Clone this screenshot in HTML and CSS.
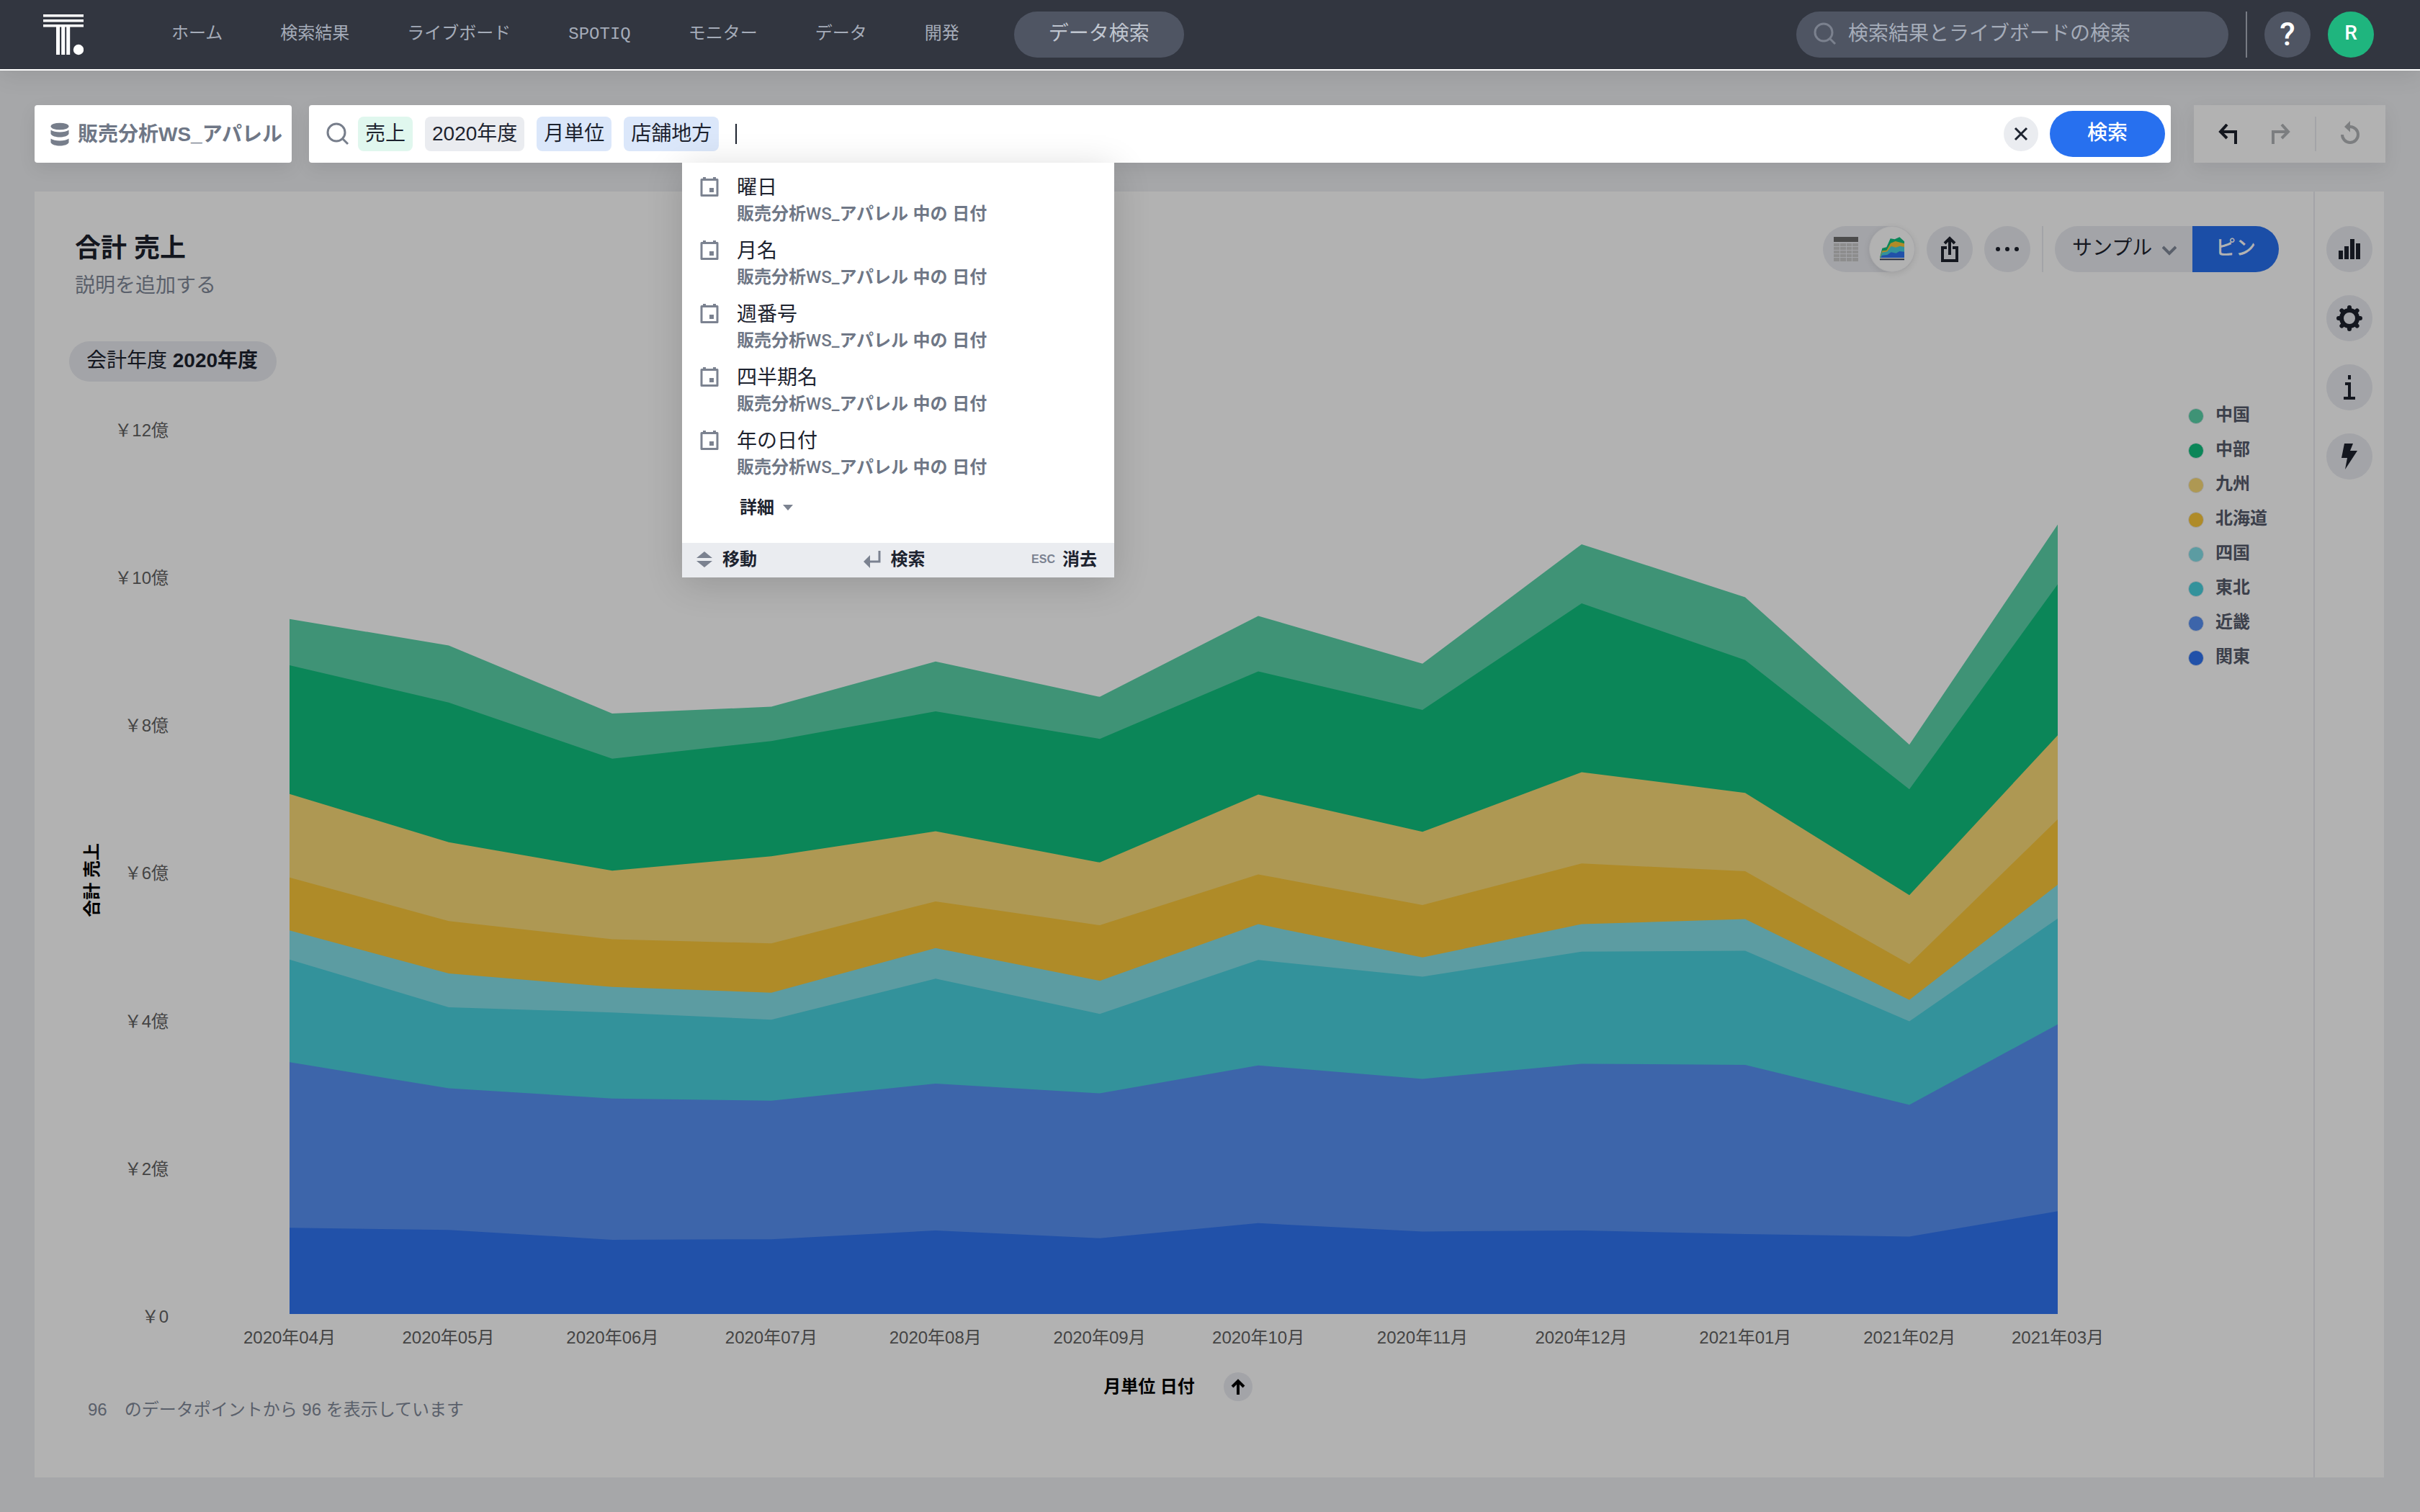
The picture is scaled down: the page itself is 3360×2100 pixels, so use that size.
FILE: index.html
```html
<!DOCTYPE html>
<html lang="ja">
<head>
<meta charset="utf-8">
<title>合計 売上</title>
<link rel="stylesheet" href="styles.css">
</head>
<body>
<header class="topbar">
  <a class="logo" href="#" aria-label="ホーム">
    <svg width="56" height="58" viewBox="0 0 56 58" fill="#fff">
      <path d="M0 1h56v3.500H0zM0 8h56v3.500H0zM0 15h56v3.500H0zM18 17h5v40h-5zM25.200 17h5v40h-5zM32.200 17h5v40h-5z"/>
      <circle cx="49" cy="50" r="7.200"/>
    </svg>
  </a>
  <nav class="nav">
    <a href="#">ホーム</a>
    <a href="#">検索結果</a>
    <a href="#">ライブボード</a>
    <a href="#">SPOTIQ</a>
    <a href="#">モニター</a>
    <a href="#">データ</a>
    <a href="#">開発</a>
  </nav>
  <button class="data-search">データ検索</button>
  <label class="global-search">
    <svg width="32" height="32" viewBox="0 0 32 32" fill="none" stroke="#7b818e" stroke-width="3"><circle cx="14" cy="14" r="12"/><path d="M22 22l8 8"/></svg>
    <input type="text" placeholder="検索結果とライブボードの検索" aria-label="検索結果とライブボードの検索">
  </label>
  <span class="topbar-rule"></span>
  <button class="round help" aria-label="ヘルプ">?</button>
  <button class="round avatar">R</button>
</header>

<main class="page">
  <div class="search-row">
    <button class="source">
      <svg width="26" height="34" viewBox="0 0 26 34" fill="#777e8b">
        <ellipse cx="13" cy="5.500" rx="12.500" ry="4.800"/>
        <path d="M.5 10.500c5 4 20 4 25 0v5.500c-3 6-22 6-25 0zM.5 22.500c5 4 20 4 25 0v5.500c-3 6-22 6-25 0z"/>
      </svg>
      販売分析WS_アパレル
    </button>
    <div class="search-box">
      <svg class="search-icon" width="32" height="32" viewBox="0 0 32 32" fill="none" stroke="#777e8b" stroke-width="3"><circle cx="14" cy="14" r="12"/><path d="M22 22l8 8"/></svg>
      <div class="tokens">
        <span class="token measure">売上</span>
        <span class="token filter">2020年度</span>
        <span class="token attribute">月単位</span>
        <span class="token attribute">店舗地方</span>
      </div>
      <span class="caret"></span>
      <input class="query" type="text" aria-label="検索語">
      <button class="clear" aria-label="クリア">
        <svg width="20" height="20" viewBox="0 0 20 20" fill="none" stroke="#1d232f" stroke-width="3"><path d="M2 2l16 16M18 2L2 18"/></svg>
      </button>
      <button class="go">検索</button>

      <div class="suggest">
        <ul class="suggest-list">
          <li><svg class="cal" viewBox="0 0 26 28"><path d="M2 3.500h22v22H2z" fill="none" stroke="#7b8290" stroke-width="3" stroke-linejoin="round"/><path d="M4 0h4v4H4zM18 0h4v4h-4zM13 15h6v6h-6z" fill="#7b8290"/></svg><p class="term">曜日</p><p class="origin">販売分析<span>WS_</span>アパレル 中の 日付</p></li>
          <li><svg class="cal" viewBox="0 0 26 28"><path d="M2 3.500h22v22H2z" fill="none" stroke="#7b8290" stroke-width="3" stroke-linejoin="round"/><path d="M4 0h4v4H4zM18 0h4v4h-4zM13 15h6v6h-6z" fill="#7b8290"/></svg><p class="term">月名</p><p class="origin">販売分析<span>WS_</span>アパレル 中の 日付</p></li>
          <li><svg class="cal" viewBox="0 0 26 28"><path d="M2 3.500h22v22H2z" fill="none" stroke="#7b8290" stroke-width="3" stroke-linejoin="round"/><path d="M4 0h4v4H4zM18 0h4v4h-4zM13 15h6v6h-6z" fill="#7b8290"/></svg><p class="term">週番号</p><p class="origin">販売分析<span>WS_</span>アパレル 中の 日付</p></li>
          <li><svg class="cal" viewBox="0 0 26 28"><path d="M2 3.500h22v22H2z" fill="none" stroke="#7b8290" stroke-width="3" stroke-linejoin="round"/><path d="M4 0h4v4H4zM18 0h4v4h-4zM13 15h6v6h-6z" fill="#7b8290"/></svg><p class="term">四半期名</p><p class="origin">販売分析<span>WS_</span>アパレル 中の 日付</p></li>
          <li><svg class="cal" viewBox="0 0 26 28"><path d="M2 3.500h22v22H2z" fill="none" stroke="#7b8290" stroke-width="3" stroke-linejoin="round"/><path d="M4 0h4v4H4zM18 0h4v4h-4zM13 15h6v6h-6z" fill="#7b8290"/></svg><p class="term">年の日付</p><p class="origin">販売分析<span>WS_</span>アパレル 中の 日付</p></li>
        </ul>
        <button class="more-terms">詳細 <svg width="14" height="8" viewBox="0 0 14 8" fill="#7b8290"><path d="M0 0h14L7 8z"/></svg></button>
        <div class="keys">
          <span class="key"><svg width="22" height="22" viewBox="0 0 22 22" fill="#7b8290"><path d="M11 0l11 9H0zM11 22l11-9H0z"/></svg>移動</span>
          <span class="key"><svg width="24" height="24" viewBox="0 0 24 24"><path d="M22 0v15H6" fill="none" stroke="#7b8290" stroke-width="3"/><path d="M0 15l9-9v18z" fill="#7b8290"/></svg>検索</span>
          <span class="key"><kbd>ESC</kbd>消去</span>
        </div>
      </div>
    </div>
    <div class="history">
      <button aria-label="元に戻す"><svg width="26" height="28" viewBox="0 0 26 28" fill="none" stroke="#14171f" stroke-width="4"><path d="M12 1L3 11l9 9M2 11h22v17"/></svg></button>
      <button class="redo" aria-label="やり直す"><svg width="26" height="28" viewBox="0 0 26 28" fill="none" stroke="#7c7e80" stroke-width="4"><path d="M14 1l9 10-9 9M24 11H2v17"/></svg></button>
      <span class="history-rule"></span>
      <button class="reset" aria-label="リセット"><svg width="26" height="32" viewBox="0 0 26 32"><path d="M2 19a11 11 0 1 0 11-11" fill="none" stroke="#7c7e80" stroke-width="4"/><path d="M13 0v15.500L5 8z" fill="#7c7e80"/></svg></button>
    </div>
  </div>

  <section class="card">
    <div class="answer">
      <div class="answer-head">
        <div class="titles">
          <h1>合計 売上</h1>
          <p>説明を追加する</p>
        </div>
        <div class="toolbar">
          <div class="view-toggle">
            <button aria-label="テーブル">
              <svg width="34" height="34" viewBox="0 0 34 34"><path d="M0 0h34v7H0z" fill="#4c4c4c"/><path d="M0 9h8v4H0zm9 0h8v4H9zm9 0h7v4h-7zm8 0h8v4h-8zM0 14h8v4H0zm9 0h8v4H9zm9 0h7v4h-7zm8 0h8v4h-8zM0 19h8v4H0zm9 0h8v4H9zm9 0h7v4h-7zm8 0h8v4h-8zM0 24h8v4H0zm9 0h8v4H9zm9 0h7v4h-7zm8 0h8v4h-8zM0 29h8v5H0zm9 0h8v5H9zm9 0h7v5h-7zm8 0h8v5h-8z" fill="#8d8d8d"/></svg>
            </button>
            <button class="active" aria-label="グラフ">
              <svg width="34" height="34" viewBox="0 0 102 100"><path d="M0 86L10 46l18-4L44 6l18 3L82 0l20 18v68z" fill="#0b8658"/><path d="M2 84l8-27 18-2 17-30 20-8 37 10v59H2z" fill="#af8b28"/><path d="M3 84l6-20 22-4 16-22 19 5 18-6 18 4v45H3z" fill="#33929b"/><path d="M3 86l6-10 22-2 16-11 21 4 14-8 20 2v25z" fill="#2151a9"/><path d="M0 90h102v6H0z" fill="#2a3140"/></svg>
            </button>
          </div>
          <button class="round tool" aria-label="共有"><svg width="24" height="36" viewBox="0 0 24 36" fill="none" stroke="#14171f" stroke-width="4"><path d="M8 16H2v18h20V16h-6M12 26V3M5 10l7-7 7 7"/></svg></button>
          <button class="round tool" aria-label="その他"><svg width="32" height="6" viewBox="0 0 32 6" fill="#14171f"><circle cx="3" cy="3" r="3"/><circle cx="16" cy="3" r="3"/><circle cx="29" cy="3" r="3"/></svg></button>
          <span class="tool-rule"></span>
          <div class="pin-group">
            <span class="board">
              <select aria-label="ボード"><option>サンプル</option></select>
              <svg width="20" height="14" viewBox="0 0 20 14" fill="none" stroke="#5a606b" stroke-width="4"><path d="M1 2l9 9 9-9"/></svg>
            </span>
            <button class="pin">ピン</button>
          </div>
        </div>
      </div>

      <button class="filter-chip">会計年度 <b>2020年度</b></button>

      <div class="chart">
        <div class="y-title"><span>合計 売上</span></div>
        <div class="y-axis"><span>￥12億</span><span>￥10億</span><span>￥8億</span><span>￥6億</span><span>￥4億</span><span>￥2億</span><span>￥0</span></div>
        <div class="plot">
          <svg class="areas" viewBox="0 -147 2455 1709" preserveAspectRatio="none">
            <path fill="#3f9376" d="M0 1562V223L221 274 448 405 669 392 897 305 1125 373 1345 217 1573 309 1794 79 2021 181 2249 465 2455 41V1562z"/>
            <path fill="#0b8658" d="M0 1562V312L221 384 448 492 669 458 897 401 1125 454 1345 324 1573 398 1794 193 2021 302 2249 551 2455 156V1562z"/>
            <path fill="#ae9853" d="M0 1562V560L221 653 448 708 669 680 897 632 1125 692 1345 561 1573 633 1794 518 2021 558 2249 755 2455 447V1562z"/>
            <path fill="#af8b28" d="M0 1562V721L221 805 448 840 669 848 897 767 1125 813 1345 715 1573 774 1794 694 2021 709 2249 888 2455 609V1562z"/>
            <path fill="#5c9ca2" d="M0 1562V823L221 906 448 932 669 943 897 857 1125 920 1345 811 1573 875 1794 811 2021 801 2249 957 2455 735V1562z"/>
            <path fill="#33929b" d="M0 1562V879L221 971 448 981 669 995 897 916 1125 984 1345 880 1573 912 1794 864 2021 862 2249 998 2455 800V1562z"/>
            <path fill="#3d65aa" d="M0 1562V1077L221 1127 448 1147 669 1151 897 1118 1125 1137 1345 1083 1573 1109 1794 1080 2021 1082 2249 1159 2455 1004V1562z"/>
            <path fill="#2151a9" d="M0 1562V1396L221 1400 448 1419 669 1418 897 1401 1125 1416 1345 1387 1573 1403 1794 1401 2021 1408 2249 1413 2455 1364V1562z"/>
          </svg>
          <div class="x-axis"><span>2020年04月</span><span>2020年05月</span><span>2020年06月</span><span>2020年07月</span><span>2020年08月</span><span>2020年09月</span><span>2020年10月</span><span>2020年11月</span><span>2020年12月</span><span>2021年01月</span><span>2021年02月</span><span>2021年03月</span></div>
          <div class="x-title">月単位 日付
            <button aria-label="昇順"><svg width="20" height="22" viewBox="0 0 20 22" fill="none" stroke="#000" stroke-width="4"><path d="M10 22V3M2 11l8-8 8 8"/></svg></button>
          </div>
        </div>
        <ul class="legend">
          <li><i class="dot chugoku"></i>中国</li>
          <li><i class="dot chubu"></i>中部</li>
          <li><i class="dot kyushu"></i>九州</li>
          <li><i class="dot hokkaido"></i>北海道</li>
          <li><i class="dot shikoku"></i>四国</li>
          <li><i class="dot tohoku"></i>東北</li>
          <li><i class="dot kinki"></i>近畿</li>
          <li><i class="dot kanto"></i>関東</li>
        </ul>
      </div>
      <p class="count"><span>96</span><span>のデータポイントから 96 を表示しています</span></p>
    </div>

    <aside class="side">
      <button class="round tool" aria-label="グラフの種類"><svg width="30" height="28" viewBox="0 0 30 28" fill="#14171f"><path d="M0 16h6v12H0zM8 10h6v18H8zM16 0h6v28h-6zM24 6h6v22h-6z"/></svg></button>
      <button class="round tool" aria-label="設定"><svg width="36" height="36" viewBox="0 0 36 36"><circle cx="18" cy="18" r="11" fill="none" stroke="#14171f" stroke-width="6"/><g stroke="#14171f" stroke-width="6" stroke-linecap="round"><path d="M18 3v3M18 30v3M3 18h3M30 18h3M7.400 7.400l2 2M26.600 26.600l2 2M28.600 7.400l-2 2M9.400 26.600l-2 2"/></g></svg></button>
      <button class="round tool" aria-label="情報"><svg width="16" height="34" viewBox="0 0 16 34" fill="#14171f"><path d="M6 0h4v6H6zM2 10h8v20h6v4H0v-4h6V14H2z"/></svg></button>
      <button class="round tool" aria-label="SpotIQ"><svg width="22" height="36" viewBox="0 0 22 36" fill="#14171f"><path d="M4 0h12l-4 10h10L5 36l3-16H0z"/></svg></button>
    </aside>
  </section>
</main>
</body>
</html>
```

FILE: styles.css
```css
* { box-sizing: border-box; }

body {
  margin: 0;
  min-height: 100vh;
  display: flex;
  flex-direction: column;
  background: #a6a7a9;
  color: #14171f;
  font-family: "Liberation Sans", "Noto Sans CJK JP", sans-serif;
  font-size: 28px;
  line-height: 40px;
}

button, input, select {
  margin: 0;
  padding: 0;
  border: 0;
  background: none;
  color: inherit;
  font: inherit;
}

input:focus { outline: none; }
svg { display: block; flex: none; }
p, h1, ul { margin: 0; padding: 0; }
ul { list-style: none; }

.round {
  width: 64px;
  height: 64px;
  border-radius: 50%;
  display: flex;
  align-items: center;
  justify-content: center;
  flex: none;
}

/* Top bar */
.topbar {
  display: flex;
  align-items: center;
  height: 98px;
  padding: 0 64px 0 60px;
  background: #323640;
  border-bottom: 2px solid #fff;
  box-shadow: 0 8px 32px rgba(0, 0, 0, 0.08);
}

.logo { margin-right: 122px; }

.nav { display: flex; gap: 80px; }

.nav a {
  color: #a5acb9;
  font-family: "Liberation Mono", "Noto Sans CJK JP", monospace;
  font-size: 24px;
  line-height: 32px;
  text-decoration: none;
  white-space: nowrap;
}

.data-search {
  width: 236px;
  height: 64px;
  margin-left: 76px;
  padding-bottom: 2px;
  border-radius: 32px;
  background: #4f5563;
  color: #c0c6d0;
  white-space: nowrap;
}

.global-search {
  display: flex;
  align-items: center;
  gap: 16px;
  width: 600px;
  height: 64px;
  margin-left: auto;
  padding: 0 24px 2px;
  border-radius: 32px;
  background: #4f5563;
}

.global-search input { flex: 1; min-width: 0; height: 40px; }
.global-search input::placeholder { color: #a5acb9; opacity: 1; }

.topbar-rule {
  width: 2px;
  height: 64px;
  margin: 0 24px;
  background: #777b84;
}

.help, .avatar {
  color: #fff;
  font-family: Roboto, sans-serif;
  font-weight: 500;
}

.help { background: #4f5563; font-size: 44px; }

.avatar {
  margin-left: 24px;
  padding-bottom: 4px;
  background: #1fb57e;
}

/* Search row */
.page {
  flex: 1;
  display: flex;
  flex-direction: column;
  gap: 40px;
  padding: 48px;
}

.search-row { display: flex; height: 80px; }

.source, .search-box, .history {
  display: flex;
  align-items: center;
  box-shadow: 0 8px 24px rgba(0, 0, 30, 0.08);
}

.source {
  gap: 12px;
  width: 357px;
  margin-right: 24px;
  padding: 2px 0 0 22px;
  border-radius: 4px;
  background: #fff;
  color: #6f7786;
  font-weight: bold;
  white-space: nowrap;
}

.search-box {
  position: relative;
  flex: 1;
  padding: 0 8px 0 24px;
  border-radius: 4px;
  background: #fff;
}

.tokens { display: flex; gap: 17px; margin-left: 12px; }

.token {
  height: 48px;
  padding: 4px 10px;
  border-radius: 8px;
  color: #1d232f;
  white-space: nowrap;
}

.measure { background: #e0f7ee; }
.filter { background: #eaecf0; }
.attribute { background: #dbe7fa; }

.caret {
  width: 2px;
  height: 28px;
  margin-left: 23px;
  background: #1d232f;
}

.query { flex: 1; min-width: 0; height: 48px; }

.clear {
  display: flex;
  align-items: center;
  justify-content: center;
  width: 48px;
  height: 48px;
  border-radius: 50%;
  background: #eaecf0;
}

.go {
  width: 160px;
  height: 64px;
  margin-left: 16px;
  padding-bottom: 2px;
  border-radius: 32px;
  background: #2770ef;
  color: #fff;
  font-weight: 500;
}

.history {
  width: 266px;
  margin-left: 32px;
  padding-left: 34px;
  background: #b2b2b2;
}

.redo { margin-left: 48px; }
.reset { padding-bottom: 4px; }

.history-rule {
  width: 2px;
  height: 48px;
  margin: 0 34px;
  background: #a3a4a8;
}

/* Suggestions */
.suggest {
  position: absolute;
  top: 100%;
  left: 518px;
  z-index: 1;
  width: 600px;
  background: #fff;
  box-shadow: 0 8px 48px rgba(0, 0, 0, 0.16);
}

.suggest-list { padding-top: 15px; }

.suggest-list li {
  display: grid;
  grid-template-columns: 51px 1fr;
  padding: 0 25px 16px;
}

.cal { width: 26px; height: 28px; margin-top: 5px; }
.term { color: #1d232f; }

.origin {
  grid-column: 2;
  color: #6f7786;
  font-size: 24px;
  font-weight: bold;
  line-height: 32px;
}

.origin span { font-family: Roboto, sans-serif; font-weight: 500; }

.more-terms {
  display: flex;
  align-items: center;
  gap: 12px;
  height: 48px;
  margin-bottom: 25px;
  margin-left: 80px;
  color: #1d232f;
  font-size: 24px;
  font-weight: bold;
}

.keys {
  display: flex;
  justify-content: space-between;
  height: 48px;
  padding: 0 24px 2px 20px;
  background: #eaecf0;
}

.key {
  display: flex;
  align-items: center;
  gap: 14px;
  color: #1d232f;
  font-size: 24px;
  font-weight: bold;
}

kbd {
  color: #7b8290;
  font-family: inherit;
  font-size: 16px;
  margin-right: -4px;
}

/* Answer card */
.card {
  flex: 1;
  display: flex;
  margin-right: 2px;
  background: #b2b2b2;
}

.answer { flex: 1; min-width: 0; padding: 48px 48px 0 48px; }

.answer-head { display: flex; justify-content: space-between; }

.titles { padding: 5px 0 0 8px; line-height: 52px; }
.titles h1 { font-size: 36px; line-height: 52px; }
.titles p { color: #5a606b; }

.toolbar { display: flex; gap: 16px; height: 64px; }
.tool { background: #a3a4a8; }
.tool-rule { width: 2px; background: #a3a4a8; }

.view-toggle {
  display: flex;
  border-radius: 32px;
  background: #a3a4a8;
}

.view-toggle button {
  display: flex;
  align-items: center;
  justify-content: center;
  width: 64px;
  height: 64px;
  border-radius: 50%;
}

.view-toggle .active {
  border: 1px solid #a9a9ab;
  background: #b2b2b2;
  box-shadow: 0 2px 8px rgba(0, 0, 0, 0.1);
}

.pin-group { display: flex; border-radius: 32px; overflow: hidden; }
.board { position: relative; width: 191px; background: #a3a4a8; }

.board select {
  width: 100%;
  height: 64px;
  padding: 0 48px 2px 24px;
  appearance: none;
}

.board svg { position: absolute; right: 22px; top: 27px; pointer-events: none; }

.pin {
  width: 120px;
  padding-bottom: 2px;
  background: #1b4ea7;
  color: #b2b2b2;
  font-weight: 500;
}

.filter-chip {
  display: block;
  height: 56px;
  margin: 51px 0 52px;
  padding: 0 26px 3px 24px;
  border-radius: 28px;
  background: #a3a4a8;
  white-space: nowrap;
}

/* Chart */
.chart {
  display: flex;
  padding-left: 16px;
  font-size: 24px;
  line-height: 32px;
}

.y-title {
  display: flex;
  align-items: center;
  width: 32px;
  height: 1280px;
  color: #000;
  font-weight: bold;
}

.y-title span {
  writing-mode: vertical-rl;
  text-orientation: sideways;
  transform: rotate(180deg);
  white-space: nowrap;
}

.y-axis {
  display: flex;
  flex-direction: column;
  justify-content: space-between;
  align-items: flex-end;
  width: 90px;
  height: 1263px;
  color: #444;
}

.plot { flex: 1; min-width: 0; margin: 11px 181px 0 168px; }
.areas { width: 100%; height: 1232px; }

/* One column per month, as wide as the month has days */
.x-axis {
  display: grid;
  grid-template-columns: 30fr 31fr 30fr 31fr 31fr 30fr 31fr 30fr 31fr 31fr 28fr 0;
  margin-top: 17px;
  color: #444;
}

.x-axis span {
  display: flex;
  justify-content: center;
  width: 0;
  white-space: nowrap;
}

.x-title {
  display: flex;
  align-items: center;
  justify-content: center;
  gap: 40px;
  margin-top: 32px;
  padding-left: 12px;
  color: #000;
  font-weight: bold;
}

.x-title button {
  display: flex;
  align-items: center;
  justify-content: center;
  width: 40px;
  height: 40px;
  border-radius: 50%;
  background: #a3a4a8;
}

.legend {
  width: 126px;
  color: #3c404b;
  font-weight: bold;
  line-height: 48px;
  margin-top: -30px;
}

.legend li { display: flex; align-items: center; gap: 16px; height: 48px; }

.dot {
  width: 22px;
  height: 22px;
  margin-top: 4px;
  border: 1px solid #a3a4a8;
  border-radius: 50%;
}

.chugoku { background: #3f9376; }
.chubu { background: #0b8658; }
.kyushu { background: #ae9853; }
.hokkaido { background: #af8b28; }
.shikoku { background: #5c9ca2; }
.tohoku { background: #33929b; }
.kinki { background: #3d65aa; }
.kanto { background: #2151a9; }

.count {
  display: flex;
  gap: 24px;
  padding-left: 26px;
  color: #5a606b;
  font-size: 24px;
  line-height: 24px;
}

/* Side rail */
.side {
  display: flex;
  flex-direction: column;
  align-items: center;
  gap: 32px;
  width: 98px;
  padding-top: 48px;
  border-left: 2px solid #a3a4a8;
}
```
